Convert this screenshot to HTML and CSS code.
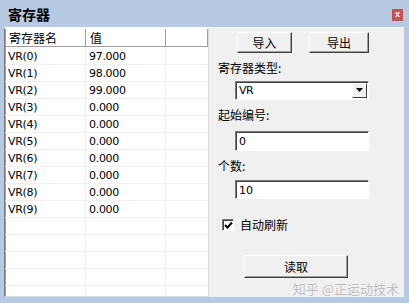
FILE: index.html
```
<!DOCTYPE html>
<html lang="zh">
<head>
    <meta charset="UTF-8">
    <title>寄存器</title>
    <link rel="stylesheet" href="styles.css">
</head>
<body>
    <div class="window">
        <div class="titlebar">
            <span class="title">寄存器</span>
            <span class="close">x</span>
        </div>
        <div class="client">
            <div class="list">
                <div class="row head">
                    <div class="cell c1">寄存器名</div>
                    <div class="cell c2">值</div>
                    <div class="cell c3"></div>
                </div>
                <div class="row"><div class="cell c1">VR(0)</div><div class="cell c2">97.000</div><div class="cell c3"></div></div>
                <div class="row"><div class="cell c1">VR(1)</div><div class="cell c2">98.000</div><div class="cell c3"></div></div>
                <div class="row"><div class="cell c1">VR(2)</div><div class="cell c2">99.000</div><div class="cell c3"></div></div>
                <div class="row"><div class="cell c1">VR(3)</div><div class="cell c2">0.000</div><div class="cell c3"></div></div>
                <div class="row"><div class="cell c1">VR(4)</div><div class="cell c2">0.000</div><div class="cell c3"></div></div>
                <div class="row"><div class="cell c1">VR(5)</div><div class="cell c2">0.000</div><div class="cell c3"></div></div>
                <div class="row"><div class="cell c1">VR(6)</div><div class="cell c2">0.000</div><div class="cell c3"></div></div>
                <div class="row"><div class="cell c1">VR(7)</div><div class="cell c2">0.000</div><div class="cell c3"></div></div>
                <div class="row"><div class="cell c1">VR(8)</div><div class="cell c2">0.000</div><div class="cell c3"></div></div>
                <div class="row"><div class="cell c1">VR(9)</div><div class="cell c2">0.000</div><div class="cell c3"></div></div>
                <div class="row"><div class="cell c1"></div><div class="cell c2"></div><div class="cell c3"></div></div>
                <div class="row"><div class="cell c1"></div><div class="cell c2"></div><div class="cell c3"></div></div>
                <div class="row"><div class="cell c1"></div><div class="cell c2"></div><div class="cell c3"></div></div>
                <div class="row"><div class="cell c1"></div><div class="cell c2"></div><div class="cell c3"></div></div>
                <div class="row"><div class="cell c1"></div><div class="cell c2"></div><div class="cell c3"></div></div>
            </div>
            <div class="panel">
                <div class="btn-row">
                    <button class="btn btn-import">导入</button>
                    <button class="btn btn-export">导出</button>
                </div>
                <div class="label">寄存器类型:</div>
                <div class="combo">
                    <span class="combo-text">VR</span>
                    <span class="combo-arrow">
                        <svg width="7" height="4" viewBox="0 0 7 4"><path d="M0 0h7L3.5 4z" fill="#000"/></svg>
                    </span>
                </div>
                <div class="label">起始编号:</div>
                <div class="field">0</div>
                <div class="label">个数:</div>
                <div class="field field-count">10</div>
                <div class="check-row">
                    <span class="checkbox">
                        <svg width="9" height="9" viewBox="0 0 9 9"><path d="M1 4l2.5 2.5L8 1.5" fill="none" stroke="#000" stroke-width="2"/></svg>
                    </span>
                    <span class="check-label">自动刷新</span>
                </div>
                <button class="btn btn-read">读取</button>
                <div class="watermark">知乎 @正运动技术</div>
            </div>
        </div>
    </div>
</body>
</html>
```

FILE: styles.css
```
body {
    margin: 0;
    width: 409px;
    height: 303px;
    overflow: hidden;
    font-family: "Liberation Sans", "Noto Sans CJK SC", sans-serif;
    font-size: 12px;
    color: #000;
}

.window {
    height: 303px;
    box-sizing: border-box;
    display: flex;
    flex-direction: column;
    background: #b6cbe3;
    padding: 0 5px 6px 4px;
}

.titlebar {
    height: 27px;
    display: flex;
    align-items: center;
    justify-content: space-between;
    padding-left: 4px;
    padding-right: 1px;
}

.title {
    font-weight: bold;
    font-size: 14px;
    margin-top: 1px;
}

.close {
    width: 11px;
    height: 12px;
    margin-top: 2px;
    background: #c75050;
    color: #fff;
    font-size: 9px;
    font-weight: bold;
    line-height: 11px;
    text-align: center;
}

.client {
    flex: 1;
    display: flex;
    background: #f0f0f0;
    min-height: 0;
}

.list {
    width: 205px;
    box-sizing: border-box;
    background: #fff;
    border-top: 2px solid #fff;
    border-left: 1px solid #7a7a7a;
    border-right: 1px solid #dcdcdc;
    border-bottom: 1px solid #dcdcdc;
    box-shadow: inset 1px 0 0 #a0a0a0;
    overflow: hidden;
}

.row {
    display: flex;
    height: 17px;
    box-sizing: border-box;
    border-bottom: 1px solid #f0f0f0;
    font-size: 11px;
    line-height: 17px;
    font-family: "DejaVu Sans", "Noto Sans CJK SC", sans-serif;
}

.row.head {
    height: 18px;
    margin-bottom: 1px;
    border-bottom: 1px solid #a0a0a0;
    font-family: "Noto Sans CJK SC", sans-serif;
    font-size: 12px;
    line-height: 17px;
    color: #000;
}

.cell {
    box-sizing: border-box;
    padding-left: 3px;
    border-right: 1px solid #f0f0f0;
    white-space: nowrap;
    letter-spacing: -0.3px;
}

.head .cell {
    border-right: 1px solid #a0a0a0;
    box-shadow: inset -1px 0 0 #fff;
    padding-left: 4px;
    letter-spacing: 0;
}

.c1 { width: 81px; }
.c2 { width: 80px; }
.c3 { flex: 1; border-right: none; }

.panel {
    flex: 1;
    display: flex;
    flex-direction: column;
    align-items: flex-start;
}

.btn-row {
    display: flex;
    margin-top: 5px;
    margin-left: 28px;
    gap: 17px;
}

.btn {
    height: 21px;
    box-sizing: border-box;
    background: #f0f0f0;
    border: 1px solid;
    border-color: #fff #404040 #404040 #fff;
    box-shadow: inset -1px -1px 0 #a0a0a0;
    font-family: "Noto Sans CJK SC", sans-serif;
    font-size: 12px;
    padding: 0;
    color: #000;
}

.btn-import { width: 55px; }
.btn-export { width: 60px; }

.label {
    margin-top: 8px;
    margin-left: 9px;
    height: 14px;
    line-height: 14px;
    font-family: "Noto Sans CJK SC", sans-serif;
}

.combo {
    margin-top: 6px;
    margin-left: 26px;
    width: 134px;
    height: 19px;
    box-sizing: border-box;
    background: #fff;
    border: 1px solid;
    border-color: #7a7a7a #fff #fff #7a7a7a;
    box-shadow: inset 1px 1px 0 #404040;
    display: flex;
    align-items: center;
    justify-content: space-between;
}

.combo-text {
    padding-left: 3px;
    font-size: 11px;
    font-family: "DejaVu Sans", sans-serif;
    letter-spacing: -0.5px;
}

.combo-arrow {
    width: 15px;
    height: 15px;
    margin-right: 1px;
    box-sizing: border-box;
    background: #f0f0f0;
    border: 1px solid;
    border-color: #fff #404040 #404040 #fff;
    display: flex;
    align-items: center;
    justify-content: center;
}

.field {
    margin-top: 9px;
    margin-left: 26px;
    width: 134px;
    height: 20px;
    box-sizing: border-box;
    background: #fff;
    border: 1px solid;
    border-color: #7a7a7a #fff #fff #7a7a7a;
    box-shadow: inset 1px 1px 0 #404040;
    padding-left: 3px;
    font-size: 11px;
    line-height: 19px;
    font-family: "DejaVu Sans", sans-serif;
}

.field-count {
    margin-top: 7px;
    height: 19px;
}

.check-row {
    margin-top: 19px;
    margin-left: 13px;
    display: flex;
    align-items: center;
    gap: 6px;
    height: 14px;
}

.checkbox {
    width: 12px;
    height: 12px;
    box-sizing: border-box;
    background: #fff;
    border: 1px solid;
    border-color: #7a7a7a #fff #fff #7a7a7a;
    box-shadow: inset 1px 1px 0 #404040;
    display: flex;
    align-items: center;
    justify-content: center;
    padding: 1px 0 0 1px;
}

.check-label {
    font-family: "Noto Sans CJK SC", sans-serif;
    line-height: 14px;
}

.btn-read {
    margin-top: 23px;
    margin-left: 35px;
    width: 104px;
    height: 24px;
}

.watermark {
    margin-top: 3px;
    align-self: flex-end;
    margin-right: 5px;
    font-family: "Noto Sans CJK SC", sans-serif;
    font-size: 13px;
    line-height: 16px;
    color: #bdbdbd;
    text-shadow: 0 0 1px #fff;
}
```
